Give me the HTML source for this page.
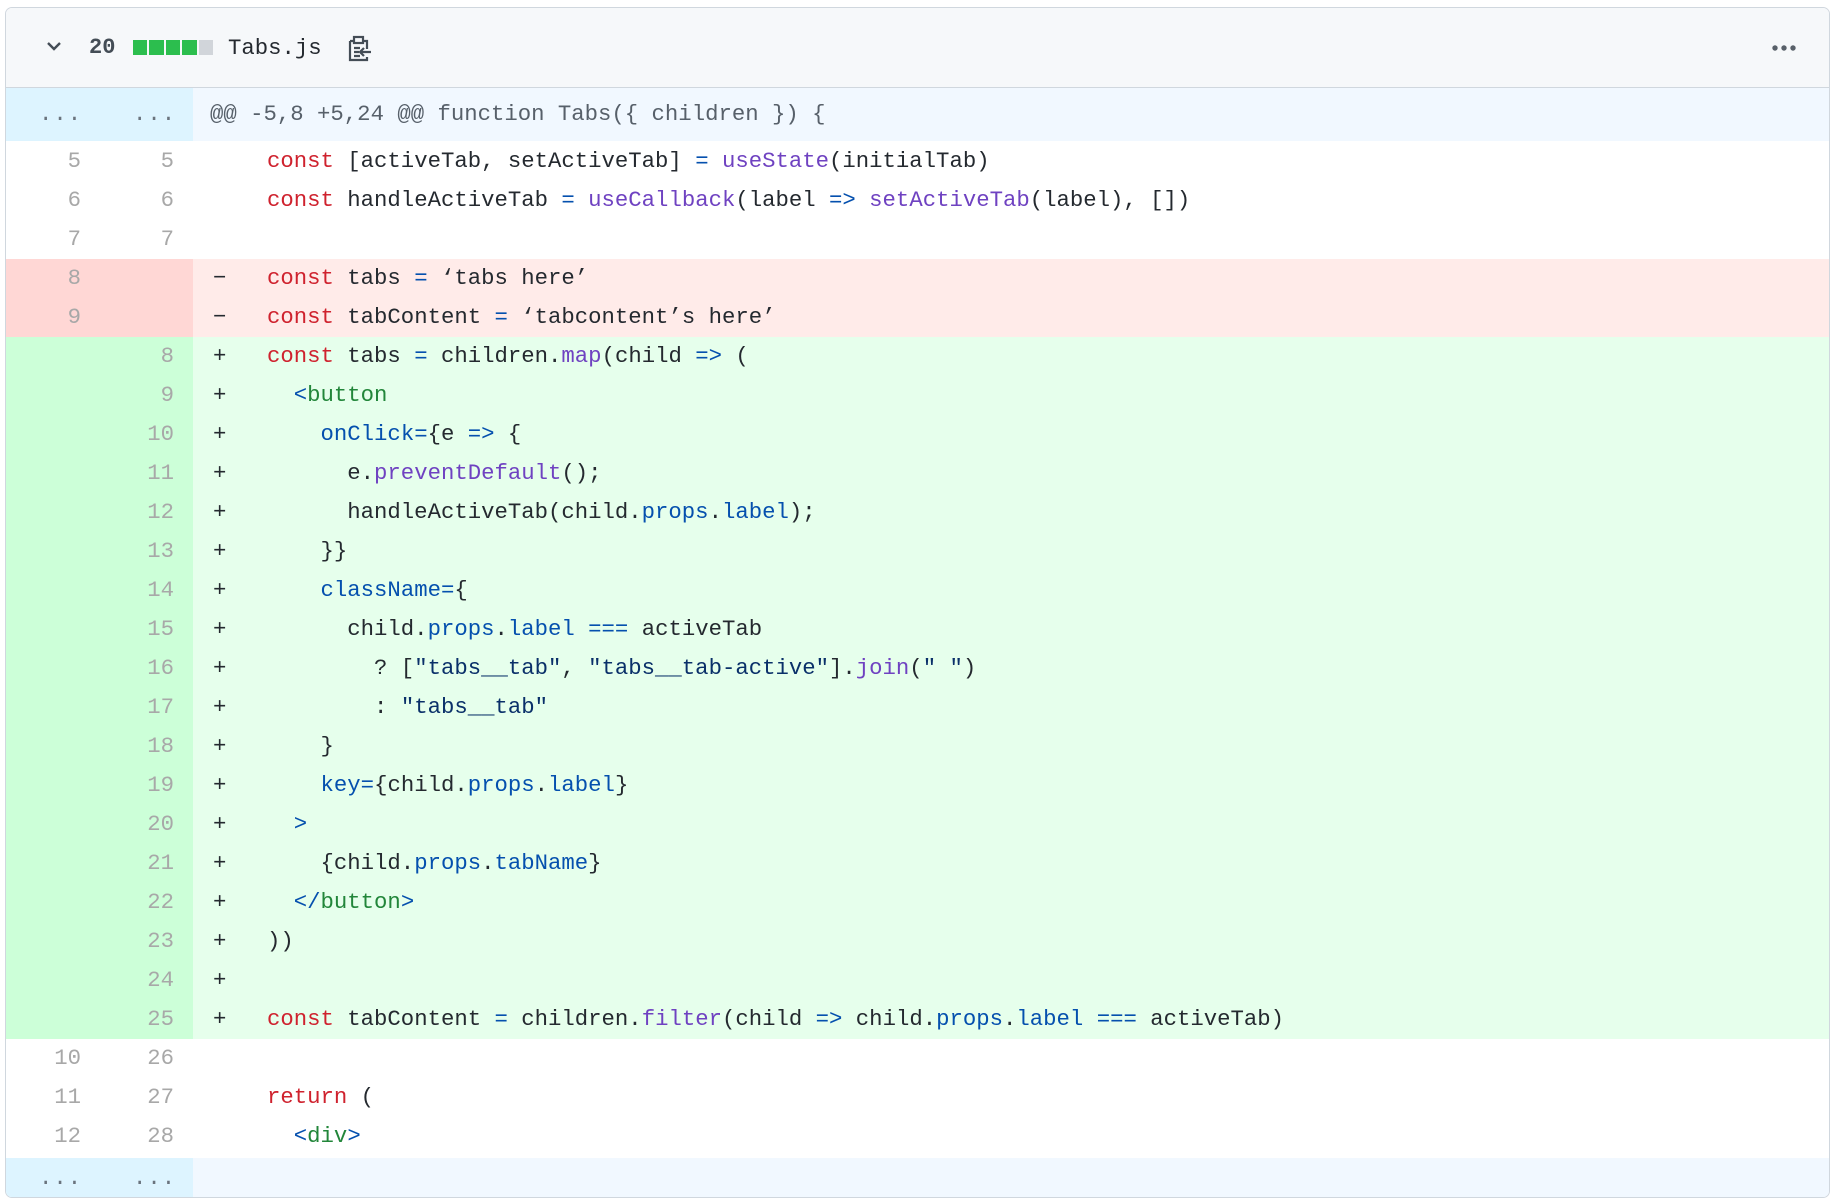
<!DOCTYPE html>
<html><head><meta charset="utf-8"><style>
*{margin:0;padding:0;box-sizing:border-box}
body{width:1838px;height:1202px;background:#fff;font-family:"Liberation Mono",monospace;overflow:hidden;position:relative}
.box{position:absolute;left:5px;top:7px;width:1825px;height:1191px;border:1px solid #d0d7de;border-radius:7px;overflow:hidden;background:#fff}
.hdr{position:absolute;left:0;top:0;width:100%;height:80px;background:#f6f8fa;border-bottom:1px solid #d0d7de}
.row{position:absolute;left:0;width:100%;height:39px;font-size:22.3px;line-height:39px;white-space:pre;color:#24292f}
.n1,.n2{position:absolute;top:0;width:60px;text-align:right;color:#a8a8a8}
.n1{left:15px}.n2{left:108px}
.g{position:absolute;left:0;top:0;width:187px;height:100%}
.m{position:absolute;left:207px;top:0;color:#24292f}
.c{position:absolute;left:261px;top:0}
.del{background:#ffebe9}.del .g{background:#ffd7d5}
.add{background:#e6ffec}.add .g{background:#ccffd8}
.hunk{background:#f1f8ff}.hunk .g{background:#ddf4ff}
.k{color:#cf222e}.b{color:#0550ae}.p{color:#6f42c1}.t{color:#22863a}.s{color:#0a3069}
.dots{position:absolute;top:0;color:#6a737d;letter-spacing:1px}
</style></head><body>
<div class="box">
<div class="hdr">
<svg style="position:absolute;left:40px;top:32px" width="16" height="12" viewBox="0 0 16 12"><path d="M2 3l6 6 6-6" stroke="#444d56" stroke-width="2.4" fill="none"/></svg>
<div style="position:absolute;left:83px;top:22px;font-size:22px;line-height:36px;font-weight:bold;color:#444d56">20</div>
<div style="position:absolute;left:127px;top:32px;width:80px;height:15px;display:flex;gap:2px">
<span style="width:15px;background:#2cbe4e"></span><span style="width:15px;background:#2cbe4e"></span><span style="width:15px;background:#2cbe4e"></span><span style="width:15px;background:#2cbe4e"></span><span style="width:15px;background:#d1d5da"></span></div>
<div style="position:absolute;left:222px;top:22px;font-size:22.3px;line-height:36px;color:#24292f">Tabs.js</div>
<svg style="position:absolute;left:338px;top:26px" width="30" height="30" viewBox="0 0 30 30" fill="none" stroke="#444d56" stroke-width="2.2"><path d="M6 7h4M19 7h4v8M23 23v3H6V7"/><rect x="10" y="3" width="9" height="6"/><path d="M10 14h6M10 18h5M10 22h6M16 18h11M20 14l-4 4 4 4"/></svg>
<svg style="position:absolute;left:1765px;top:36px" width="26" height="8"><circle cx="4" cy="4" r="2.7" fill="#586069"/><circle cx="13" cy="4" r="2.7" fill="#586069"/><circle cx="22" cy="4" r="2.7" fill="#586069"/></svg>
</div>

<div class="row hunk" style="top:80px;height:53px;line-height:53px"><div class="g"></div><span class="dots" style="left:33px">...</span><span class="dots" style="left:127px">...</span><span style="position:absolute;left:204px;color:#57606a">@@ -5,8 +5,24 @@ function Tabs({ children }) {</span></div>

<div class="row" style="top:134px"><span class="n1">5</span><span class="n2">5</span><span class="c"><span class="k">const</span> [activeTab, setActiveTab] <span class="b">=</span> <span class="p">useState</span>(initialTab)</span></div>
<div class="row" style="top:173px"><span class="n1">6</span><span class="n2">6</span><span class="c"><span class="k">const</span> handleActiveTab <span class="b">=</span> <span class="p">useCallback</span>(label <span class="b">=&gt;</span> <span class="p">setActiveTab</span>(label), [])</span></div>
<div class="row" style="top:212px"><span class="n1">7</span><span class="n2">7</span></div>
<div class="row del" style="top:251px"><div class="g"></div><span class="n1">8</span><span class="m">−</span><span class="c"><span class="k">const</span> tabs <span class="b">=</span> ‘tabs here’</span></div>
<div class="row del" style="top:290px"><div class="g"></div><span class="n1">9</span><span class="m">−</span><span class="c"><span class="k">const</span> tabContent <span class="b">=</span> ‘tabcontent’s here’</span></div>
<div class="row add" style="top:329px"><div class="g"></div><span class="n2">8</span><span class="m">+</span><span class="c"><span class="k">const</span> tabs <span class="b">=</span> children.<span class="p">map</span>(child <span class="b">=&gt;</span> (</span></div>
<div class="row add" style="top:368px"><div class="g"></div><span class="n2">9</span><span class="m">+</span><span class="c">  <span class="b">&lt;</span><span class="t">button</span></span></div>
<div class="row add" style="top:407px"><div class="g"></div><span class="n2">10</span><span class="m">+</span><span class="c">    <span class="b">onClick=</span>{e <span class="b">=&gt;</span> {</span></div>
<div class="row add" style="top:446px"><div class="g"></div><span class="n2">11</span><span class="m">+</span><span class="c">      e.<span class="p">preventDefault</span>();</span></div>
<div class="row add" style="top:485px"><div class="g"></div><span class="n2">12</span><span class="m">+</span><span class="c">      handleActiveTab(child.<span class="b">props</span>.<span class="b">label</span>);</span></div>
<div class="row add" style="top:524px"><div class="g"></div><span class="n2">13</span><span class="m">+</span><span class="c">    }}</span></div>
<div class="row add" style="top:563px"><div class="g"></div><span class="n2">14</span><span class="m">+</span><span class="c">    <span class="b">className=</span>{</span></div>
<div class="row add" style="top:602px"><div class="g"></div><span class="n2">15</span><span class="m">+</span><span class="c">      child.<span class="b">props</span>.<span class="b">label</span> <span class="b">===</span> activeTab</span></div>
<div class="row add" style="top:641px"><div class="g"></div><span class="n2">16</span><span class="m">+</span><span class="c">        ? [<span class="s">"tabs__tab"</span>, <span class="s">"tabs__tab-active"</span>].<span class="p">join</span>(<span class="s">" "</span>)</span></div>
<div class="row add" style="top:680px"><div class="g"></div><span class="n2">17</span><span class="m">+</span><span class="c">        : <span class="s">"tabs__tab"</span></span></div>
<div class="row add" style="top:719px"><div class="g"></div><span class="n2">18</span><span class="m">+</span><span class="c">    }</span></div>
<div class="row add" style="top:758px"><div class="g"></div><span class="n2">19</span><span class="m">+</span><span class="c">    <span class="b">key=</span>{child.<span class="b">props</span>.<span class="b">label</span>}</span></div>
<div class="row add" style="top:797px"><div class="g"></div><span class="n2">20</span><span class="m">+</span><span class="c">  <span class="b">&gt;</span></span></div>
<div class="row add" style="top:836px"><div class="g"></div><span class="n2">21</span><span class="m">+</span><span class="c">    {child.<span class="b">props</span>.<span class="b">tabName</span>}</span></div>
<div class="row add" style="top:875px"><div class="g"></div><span class="n2">22</span><span class="m">+</span><span class="c">  <span class="b">&lt;/</span><span class="t">button</span><span class="b">&gt;</span></span></div>
<div class="row add" style="top:914px"><div class="g"></div><span class="n2">23</span><span class="m">+</span><span class="c">))</span></div>
<div class="row add" style="top:953px"><div class="g"></div><span class="n2">24</span><span class="m">+</span></div>
<div class="row add" style="top:992px"><div class="g"></div><span class="n2">25</span><span class="m">+</span><span class="c"><span class="k">const</span> tabContent <span class="b">=</span> children.<span class="p">filter</span>(child <span class="b">=&gt;</span> child.<span class="b">props</span>.<span class="b">label</span> <span class="b">===</span> activeTab)</span></div>
<div class="row" style="top:1031px"><span class="n1">10</span><span class="n2">26</span></div>
<div class="row" style="top:1070px"><span class="n1">11</span><span class="n2">27</span><span class="c"><span class="k">return</span> (</span></div>
<div class="row" style="top:1109px"><span class="n1">12</span><span class="n2">28</span><span class="c">  <span class="b">&lt;</span><span class="t">div</span><span class="b">&gt;</span></span></div>
<div class="row hunk" style="top:1150px;height:41px;line-height:41px"><div class="g"></div><span class="dots" style="left:33px">...</span><span class="dots" style="left:127px">...</span></div>
</div>
</body></html>
